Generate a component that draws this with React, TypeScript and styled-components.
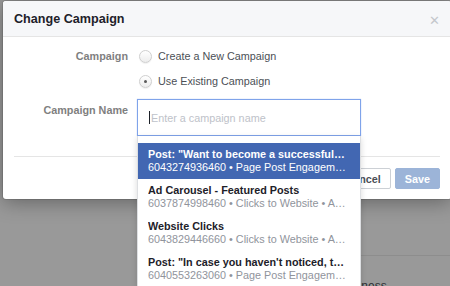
import React from "react";
import styled, { createGlobalStyle } from "styled-components";

const GlobalStyle = createGlobalStyle`
  html, body {
    margin: 0;
    padding: 0;
    width: 450px;
    height: 286px;
    overflow: hidden;
    background: #ffffff;
    font-family: "Liberation Sans", Helvetica, Arial, sans-serif;
  }
`;

interface Campaign {
  id: string;
  name: string;
  objective: string;
}

const campaigns: Campaign[] = [
  { id: "6043274936460", name: "Post: \"Want to become a successful photographer?\"", objective: "Page Post Engagement" },
  { id: "6037874998460", name: "Ad Carousel - Featured Posts", objective: "Clicks to Website \u2022 Auction" },
  { id: "6043829446660", name: "Website Clicks", objective: "Clicks to Website \u2022 Auction" },
  { id: "6040553263060", name: "Post: \"In case you haven't noticed, there's a new look\"", objective: "Page Post Engagement" },
];

const Page = styled.div`
  position: relative;
  width: 450px;
  height: 286px;
  overflow: hidden;
  padding: 255px 0 0 300px;
  box-sizing: border-box;
`;

const PageDivider = styled.div`
  border-top: 1px solid #ebebeb;
`;

const PageText = styled.div`
  padding: 23px 0 0 38px;
  font-size: 12px;
  color: #4b4f56;
`;

const Overlay = styled.div`
  position: absolute;
  inset: 0;
  background: rgba(0, 0, 0, 0.4);
`;

const Dialog = styled.div`
  position: absolute;
  top: 1px;
  left: 3px;
  width: 448px;
  background: #ffffff;
  border-radius: 3px;
  box-shadow: 0 3px 20px rgba(0, 0, 0, 0.35), 0 0 0 1px rgba(0, 0, 0, 0.1);
`;

const Header = styled.div`
  display: flex;
  align-items: center;
  justify-content: space-between;
  height: 35px;
  padding: 0 11px;
  background: #f6f7f9;
  border-bottom: 1px solid #e5e5e5;
  border-radius: 3px 3px 0 0;
`;

const Title = styled.h3`
  margin: 0;
  font-size: 12.6px;
  font-weight: bold;
  color: #1d2129;
`;

const Close = styled.span`
  margin-top: 3px;
  font-size: 13px;
  line-height: 1;
  color: #c4c7cc;
`;

const Body = styled.div`
  padding: 10px 11px 0;
`;

const FormGrid = styled.div`
  display: grid;
  grid-template-columns: 114px 1fr;
  column-gap: 9px;
  row-gap: 9px;
`;

const Label = styled.div<{ $top?: number }>`
  text-align: right;
  font-size: 10.8px;
  font-weight: bold;
  line-height: 18px;
  color: #7f7f7f;
  padding-top: ${(p) => p.$top ?? 0}px;
`;

const RadioGroup = styled.div`
  display: flex;
  flex-direction: column;
  gap: 7px;
`;

const RadioOption = styled.label`
  display: flex;
  align-items: center;
  gap: 6px;
  height: 18px;
  font-size: 10.8px;
  color: #4b4f56;
`;

const RadioCircle = styled.span<{ $checked?: boolean }>`
  position: relative;
  width: 11px;
  height: 11px;
  margin-left: 2px;
  border-radius: 50%;
  border: 1px solid #cfcfcf;
  background: linear-gradient(#ffffff, #ededed);
  box-shadow: 0 1px 1px rgba(0, 0, 0, 0.06);
  &::after {
    content: "";
    display: ${(p) => (p.$checked ? "block" : "none")};
    position: absolute;
    top: 4px;
    left: 4px;
    width: 3px;
    height: 3px;
    border-radius: 50%;
    background: #5a5a5a;
  }
`;

const InputWrap = styled.div`
  position: relative;
  width: 224px;
`;

const InputBox = styled.div`
  display: flex;
  align-items: center;
  height: 37px;
  box-sizing: border-box;
  padding: 0 11px;
  border: 1px solid #7fa3ea;
  box-shadow: 0 0 1px #a9c2f2;
  background: #ffffff;
  font-size: 10.8px;
`;

const Caret = styled.span`
  width: 1px;
  height: 13px;
  background: #1d2129;
  margin-right: 1px;
`;

const Placeholder = styled.span`
  color: #bec2c9;
`;

const Menu = styled.div`
  position: absolute;
  top: 100%;
  left: 0;
  width: 224px;
  box-sizing: border-box;
  padding-top: 7px;
  background: #ffffff;
  border-left: 1px solid #dddfe2;
  border-right: 1px solid #dddfe2;
  box-shadow: 0 2px 6px rgba(0, 0, 0, 0.15);
  z-index: 2;
`;

const MenuItem = styled.div<{ $active?: boolean }>`
  padding: 5px 13px 5px 10px;
  height: 26px;
  background: ${(p) => (p.$active ? "#4267b2" : "#ffffff")};
  font-size: 10.8px;
  line-height: 13px;
`;

const ItemTitle = styled.div<{ $active?: boolean }>`
  font-weight: bold;
  color: ${(p) => (p.$active ? "#ffffff" : "#1d2129")};
  white-space: nowrap;
  overflow: hidden;
  text-overflow: ellipsis;
`;

const ItemMeta = styled.div<{ $active?: boolean }>`
  color: ${(p) => (p.$active ? "#ffffff" : "#90949c")};
  white-space: nowrap;
  overflow: hidden;
  text-overflow: ellipsis;
`;

const Separator = styled.div`
  margin-top: 20px;
  border-top: 1px solid #e5e5e5;
`;

const Footer = styled.div`
  display: flex;
  justify-content: flex-end;
  gap: 4px;
  padding: 11px 0 10px;
`;

const Button = styled.button<{ $primary?: boolean }>`
  height: 21px;
  padding: 0 9px;
  border-radius: 2px;
  font-family: inherit;
  font-size: 10.8px;
  font-weight: bold;
  border: 1px solid ${(p) => (p.$primary ? "#9cb4d8" : "#ccd0d5")};
  background: ${(p) => (p.$primary ? "#9cb4d8" : "#ffffff")};
  color: ${(p) => (p.$primary ? "#ffffff" : "#4b4f56")};
`;

const App: React.FC = () => {
  return (
    <>
      <GlobalStyle />
      <Page>
        <PageDivider />
        <PageText>Business</PageText>
        <Overlay />
        <Dialog>
          <Header>
            <Title>Change Campaign</Title>
            <Close>&#x2715;</Close>
          </Header>
          <Body>
            <FormGrid>
              <Label>Campaign</Label>
              <RadioGroup>
                <RadioOption>
                  <RadioCircle />
                  Create a New Campaign
                </RadioOption>
                <RadioOption>
                  <RadioCircle $checked />
                  Use Existing Campaign
                </RadioOption>
              </RadioGroup>
              <Label $top={2}>Campaign Name</Label>
              <InputWrap>
                <InputBox>
                  <Caret />
                  <Placeholder>Enter a campaign name</Placeholder>
                </InputBox>
                <Menu>
                  {campaigns.map((c, i) => (
                    <MenuItem key={c.id} $active={i === 0}>
                      <ItemTitle $active={i === 0}>{c.name}</ItemTitle>
                      <ItemMeta $active={i === 0}>
                        {c.id} &bull; {c.objective}
                      </ItemMeta>
                    </MenuItem>
                  ))}
                </Menu>
              </InputWrap>
            </FormGrid>
            <Separator />
            <Footer>
              <Button>Cancel</Button>
              <Button $primary>Save</Button>
            </Footer>
          </Body>
        </Dialog>
      </Page>
    </>
  );
};

export default App;
